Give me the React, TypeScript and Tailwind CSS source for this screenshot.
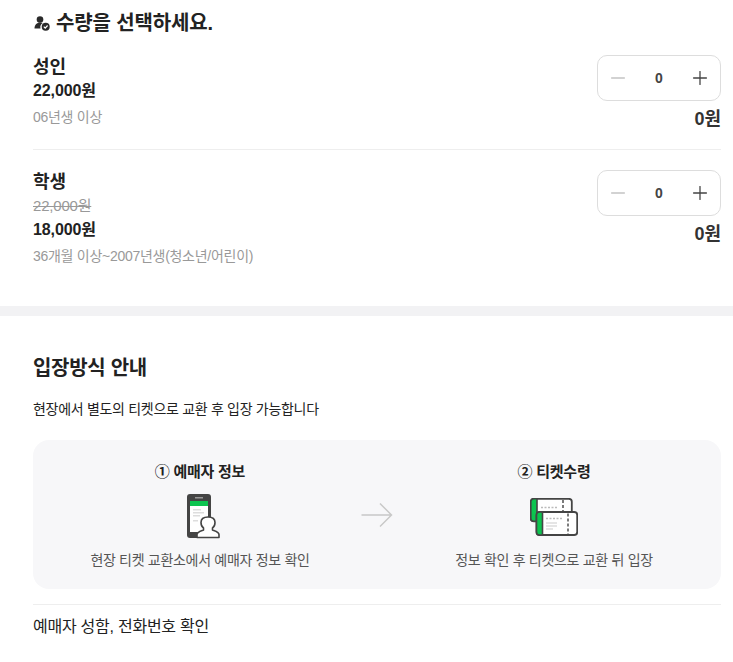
import { Minus, Plus } from "lucide-react";

const font = "font-['Liberation_Sans','Noto_Sans_CJK_KR',sans-serif]";

function Stepper() {
  return (
    <div className="flex h-[46px] w-[124px] items-center justify-between rounded-[10px] border border-[#dddddd] px-[9px]">
      <Minus className="h-[22px] w-[22px] text-[#c4c4c4]" strokeWidth={1.4} />
      <span className="text-[14px] font-bold text-[#444]">0</span>
      <Plus className="h-[22px] w-[22px] text-[#444]" strokeWidth={1.4} />
    </div>
  );
}

function PhoneIcon() {
  return (
    <svg className="ml-[6px]" width="34" height="46" viewBox="0 0 34 46">
      <rect x="1" y="0" width="24" height="44" rx="3" fill="#444" />
      <rect x="4" y="7" width="18" height="31" fill="#fff" />
      <rect x="9" y="3" width="8" height="1.500" fill="#999" />
      <rect x="4" y="7" width="18" height="5" fill="#0cc44f" />
      <rect x="7" y="15" width="8" height="1.500" fill="#ddd" />
      <rect x="7" y="18" width="11" height="1.500" fill="#ddd" />
      <rect x="7" y="21" width="7" height="1.500" fill="#ddd" />
      <rect x="7" y="26" width="5" height="1.500" fill="#ddd" />
      <path
        d="M11 43.500v-3c0-2.500 4-3.500 6.500-4.500v-2c-1.500-1-2.500-3-2.500-5.500 0-3.500 2-5.500 7-5.500s7 2 7 5.500c0 2.500-1 4.500-2.500 5.500v2c2.500 1 6.500 2 6.500 4.500v3z"
        fill="#fff"
        stroke="#444"
        strokeWidth="1.600"
        strokeLinejoin="round"
      />
    </svg>
  );
}

function TicketIcon() {
  return (
    <svg width="48" height="38" viewBox="0 0 48 38">
      <rect x="0.800" y="0.800" width="41" height="22.500" rx="3" fill="#fff" stroke="#444" strokeWidth="1.800" />
      <path d="M7 0.800H3.800a3 3 0 0 0-3 3v16.500a3 3 0 0 0 3 3H7z" fill="#0cc44f" stroke="#444" strokeWidth="1.600" />
      <path d="M33 2v12" stroke="#444" strokeWidth="1.400" strokeDasharray="3 2" />
      <path d="M11 9.500h16" stroke="#bbb" strokeWidth="1.400" strokeDasharray="2 1.500" />
      <rect x="6.500" y="14" width="40.700" height="23" rx="3" fill="#fff" stroke="#444" strokeWidth="1.800" />
      <path d="M12.500 14H9.500a3 3 0 0 0-3 3v17a3 3 0 0 0 3 3h3z" fill="#0cc44f" stroke="#444" strokeWidth="1.600" />
      <path d="M38 15.500v21" stroke="#444" strokeWidth="1.400" strokeDasharray="3 2" />
      <path d="M16 20.500h16" stroke="#bbb" strokeWidth="1.400" strokeDasharray="2 1.500" />
      <path d="M16 25h11M16 28h11M16 31h7" stroke="#ddd" strokeWidth="1.500" />
    </svg>
  );
}

function TitleIcon() {
  return (
    <svg width="16" height="16" viewBox="0 0 16 16">
      <circle cx="6" cy="4.500" r="3.300" fill="#2a2a2a" />
      <path d="M0.500 13.500c0-3.800 2.500-6 5.500-6 1 0 2 .2 2.700.6-1.800 1-2.800 3-2.200 5.400z" fill="#2a2a2a" />
      <circle cx="11.700" cy="11.700" r="4" fill="#2a2a2a" />
      <path d="M9.800 11.700l1.400 1.400 2.400-2.600" fill="none" stroke="#fff" strokeWidth="1.200" />
    </svg>
  );
}

function Step({ title, icon, desc }: { title: string; icon: React.ReactNode; desc: string }) {
  return (
    <div className="flex w-[260px] flex-col items-center">
      <div className="h-[20px] text-[15px] leading-[20px] font-bold tracking-[-0.25px] text-[#222]">{title}</div>
      <div className="mt-[11px] flex h-[48px] items-center justify-center">{icon}</div>
      <div className="mt-[9px] text-[14px] leading-[20px] tracking-[-0.3px] text-[#555]">{desc}</div>
    </div>
  );
}

export default function App() {
  return (
    <div className={`${font} h-[662px] overflow-hidden bg-white text-[#222]`}>
      <div className="pr-[12px] pl-[33px]">
        <div className="ml-[1px] flex h-[46px] items-center gap-[6px]">
          <TitleIcon />
          <h2 className="text-[20px] font-bold tracking-[-0.15px] text-[#222]">수량을 선택하세요.</h2>
        </div>

        <div className="flex h-[104px] justify-between border-b border-[#eeeeee]">
          <div>
            <div className="mt-[10px] text-[18px] leading-[22px] font-bold">성인</div>
            <div className="mt-[2px] text-[16px] leading-[22px] font-bold tracking-[-0.1px]">22,000원</div>
            <div className="mt-[5px] text-[14px] leading-[20px] tracking-[-0.28px] text-[#999]">06년생 이상</div>
          </div>
          <div className="flex flex-col items-end pt-[9px]">
            <Stepper />
            <div className="mt-[6px] text-[18px] leading-[24px] font-bold text-[#333]">0원</div>
          </div>
        </div>

        <div className="flex h-[156px] justify-between">
          <div>
            <div className="mt-[21px] text-[18px] leading-[22px] font-bold">학생</div>
            <div className="mt-[2px] text-[15px] leading-[22px] tracking-[-0.2px] text-[#999] line-through">22,000원</div>
            <div className="mt-[2px] text-[16px] leading-[22px] font-bold tracking-[-0.1px]">18,000원</div>
            <div className="mt-[5px] text-[14px] leading-[20px] tracking-[-0.28px] text-[#999]">36개월 이상~2007년생(청소년/어린이)</div>
          </div>
          <div className="flex flex-col items-end pt-[20px]">
            <Stepper />
            <div className="mt-[6px] text-[18px] leading-[24px] font-bold text-[#333]">0원</div>
          </div>
        </div>
      </div>

      <div className="h-[10px] bg-[#f2f2f4]" />

      <div className="pr-[12px] pl-[33px]">
        <h2 className="mt-[39px] text-[20px] leading-[26px] font-bold tracking-[-0.3px]">입장방식 안내</h2>
        <p className="mt-[18px] text-[14px] leading-[20px] tracking-[-0.3px] text-[#222]">현장에서 별도의 티켓으로 교환 후 입장 가능합니다</p>

        <div className="mt-[21px] flex h-[149px] items-start justify-between rounded-[16px] bg-[#f7f7f9] px-[37px] pt-[22px]">
          <Step title="① 예매자 정보" icon={<PhoneIcon />} desc="현장 티켓 교환소에서 예매자 정보 확인" />
          <svg className="mt-[40px]" width="32" height="26" viewBox="0 0 32 26" fill="none" stroke="#c8c8c8" strokeWidth="1.500">
            <path d="M0.500 13H30M19 1.500L30.500 13 19 24.500" />
          </svg>
          <Step title="② 티켓수령" icon={<TicketIcon />} desc="정보 확인 후 티켓으로 교환 뒤 입장" />
        </div>

        <div className="mt-[15px] border-t border-[#eeeeee] pt-[12px] text-[16px] leading-[20px] tracking-[-0.25px] text-[#222]">예매자 성함, 전화번호 확인</div>
      </div>
    </div>
  );
}
